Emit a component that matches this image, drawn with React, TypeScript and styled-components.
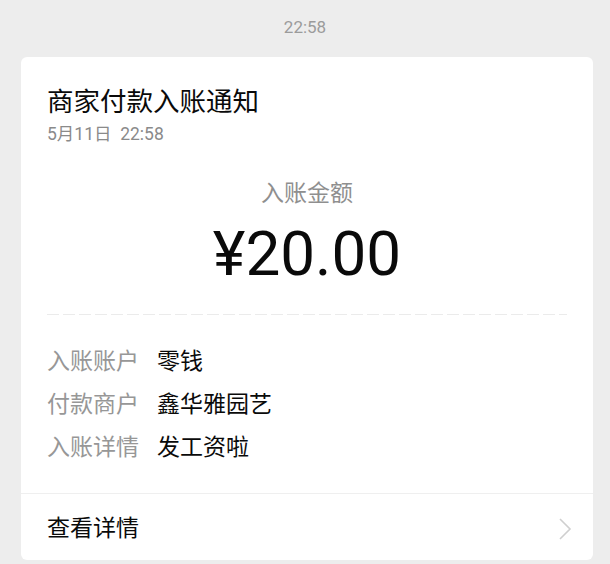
import React from 'react';
import styled, {createGlobalStyle} from 'styled-components';

const GlobalStyle = createGlobalStyle`
  html, body {
    margin: 0;
    padding: 0;
    background: #ededed;
  }
  body {
    font-family: Roboto, "Noto Sans CJK SC", "Noto Sans", sans-serif;
    -webkit-font-smoothing: antialiased;
  }
`

const Page = styled.div`
  width: 610px;
  height: 564px;
  overflow: hidden;
  background: #ededed;
  padding-top: 16px;
  box-sizing: border-box;
`

const TimeStamp = styled.div`
  text-align: center;
  font-size: 17px;
  line-height: 22px;
  color: #9b9b9b;
`

const Card = styled.div`
  margin: 19px 17px 0 21px;
  background: #fff;
  border-radius: 6px;
  overflow: hidden;
`

const Body = styled.div`
  padding: 28px 26px 24px 26px;
`

const Title = styled.div`
  font-size: 26.5px;
  line-height: 34px;
  color: #0a0a0a;
`

const DateText = styled.div`
  font-size: 17.5px;
  line-height: 24px;
  color: #8a8a8a;
  margin-top: 3px;
  white-space: pre;
`

const Amount = styled.div`
  display: flex;
  flex-direction: column;
  align-items: center;
  margin-top: 33px;
`

const AmountLabel = styled.div`
  font-size: 23px;
  line-height: 30px;
  color: #8f8f8f;
`

const AmountValue = styled.div`
  font-size: 62px;
  line-height: 72px;
  color: #0a0a0a;
  margin-top: 9px;
`

const Dashed = styled.div`
  margin-top: 24px;
  height: 1px;
  background-image: linear-gradient(to right, #ebebeb 75%, transparent 25%);
  background-size: 16px 1px;
  background-repeat: repeat-x;
`

const Rows = styled.div`
  margin-top: 25px;
  display: grid;
  grid-template-columns: 110px 1fr;
`

const Label = styled.div`
  font-size: 23px;
  line-height: 43px;
  color: #979797;
`

const Value = styled.div`
  font-size: 23px;
  line-height: 43px;
  color: #0a0a0a;
`

const Footer = styled.div`
  border-top: 1px solid #efefef;
  height: 67px;
  padding: 3px 21px 0 26px;
  box-sizing: border-box;
  display: flex;
  align-items: center;
  justify-content: space-between;
`

const FooterText = styled.div`
  font-size: 23px;
  line-height: 30px;
  color: #0a0a0a;
`

const Chevron = () => (
  <svg width="14" height="24" viewBox="0 0 14 24" fill="none">
    <path d="M2 2 L12 12 L2 22" stroke="#cfcfcf" strokeWidth="1.6" strokeLinejoin="miter" />
  </svg>
)

const rows = [
  {label: '入账账户', value: '零钱'},
  {label: '付款商户', value: '鑫华雅园艺'},
  {label: '入账详情', value: '发工资啦'},
]

export default function App() {
  return <Page>
    <GlobalStyle/>
    <TimeStamp>22:58</TimeStamp>
    <Card>
      <Body>
        <Title>商家付款入账通知</Title>
        <DateText>{'5月11日  22:58'}</DateText>

        <Amount>
          <AmountLabel>入账金额</AmountLabel>
          <AmountValue>¥20.00</AmountValue>
        </Amount>

        <Dashed/>

        <Rows>
          {rows.map(r => <React.Fragment key={r.label}>
            <Label>{r.label}</Label>
            <Value>{r.value}</Value>
          </React.Fragment>)}
        </Rows>
      </Body>
      <Footer>
        <FooterText>查看详情</FooterText>
        <Chevron/>
      </Footer>
    </Card>
  </Page>
}
